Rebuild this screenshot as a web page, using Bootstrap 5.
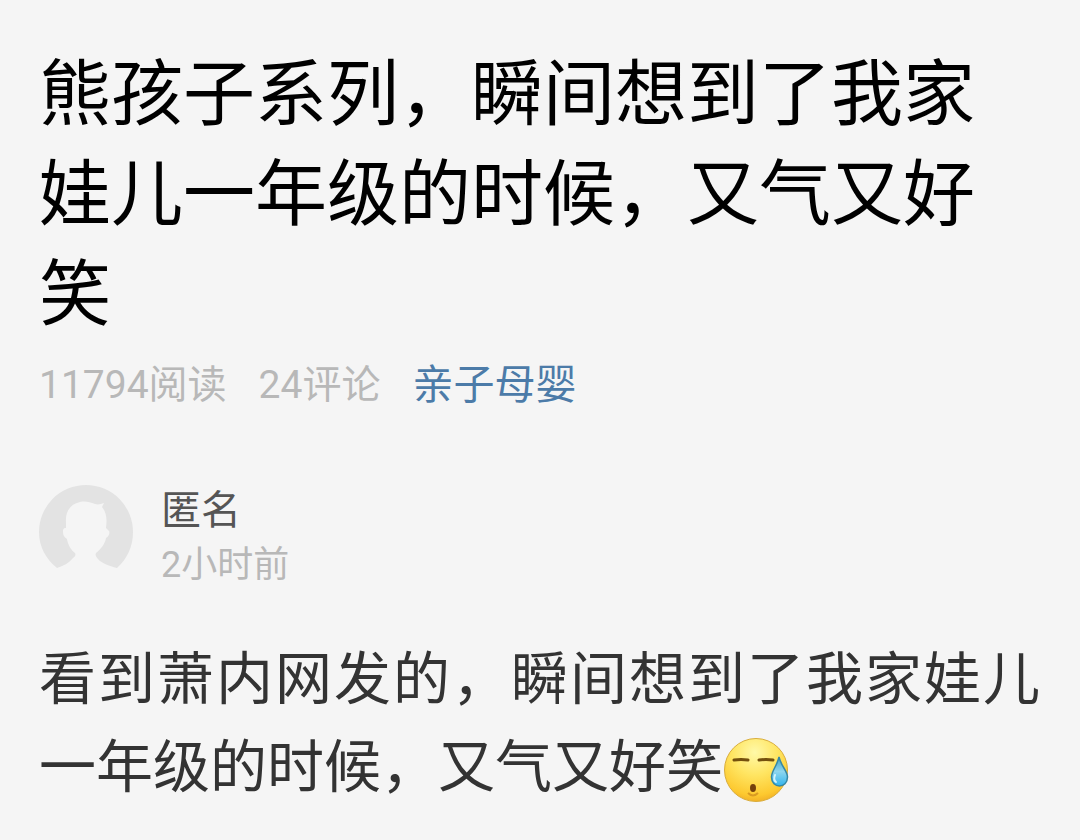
<!DOCTYPE html>
<html lang="zh-CN">
<head>
<meta charset="utf-8">
<meta name="viewport" content="width=device-width, initial-scale=1">
<title>熊孩子系列</title>
<link href="https://cdn.jsdelivr.net/npm/bootstrap@5.3.0/dist/css/bootstrap.min.css" rel="stylesheet">
<style>
body { background: #f5f5f5; font-family: "Noto Sans CJK SC", sans-serif; }
.post { padding: 38px 40px 24px 39px; }
.post-title { font-size: 72px; line-height: 100px; font-weight: 400; color: #000; margin-bottom: 23px; padding-right: 28px; }
.post-meta { font-size: 39px; line-height: 48px; gap: 32px; color: #b8b8b8; font-family: Roboto, "Noto Sans CJK SC", sans-serif; margin-bottom: 69px; }
.post-topic { font-size: 41px; color: #4c7ba8; }
.author { gap: 28px; margin-bottom: 36px; }
.avatar { width: 94px; height: 94px; margin-top: 7px; }
.author-name { font-size: 40px; line-height: 58px; color: #555; }
.author-time { font-size: 36px; line-height: 58px; color: #b8b8b8; font-family: Roboto, "Noto Sans CJK SC", sans-serif; }
.post-body { font-size: 57px; line-height: 88px; color: #333; text-align: justify; }
.emoji { width: 66px; height: 66px; vertical-align: -16px; }
</style>
</head>
<body>
<main class="post">
  <h1 class="post-title">熊孩子系列，瞬间想到了我家娃儿一年级的时候，又气又好笑</h1>
  <div class="post-meta d-flex flex-wrap align-items-center">
    <span>11794阅读</span>
    <span>24评论</span>
    <a class="post-topic text-decoration-none" href="#">亲子母婴</a>
  </div>
  <div class="author d-flex align-items-start">
    <svg class="avatar flex-shrink-0" viewBox="0 0 94 94" aria-hidden="true">
      <path fill="#e3e3e3" d="M18 83C7 74 0 62 0 47a47 47 0 0 1 94 0c0 15-6 27-16 36C70 81 62 78 59 74c-2-2-3-4-2-6 5-4 9-9 10-15 3-2 4-5 3-7l-3-3c1-8 1-15-4-21l2-4c-3 1-6 2-9 1-5-2-10-3-15-2-10 2-15 10-14 21v5c-3 0-3 2-3 4 0 3 1 5 4 7 1 6 4 11 8 14 1 2 0 4-2 5-4 5-10 8-16 10Z"/>
    </svg>
    <div>
      <div class="author-name">匿名</div>
      <div class="author-time">2小时前</div>
    </div>
  </div>
  <p class="post-body mb-0">看到萧内网发的，瞬间想到了我家娃儿一年级的时候，又气又好笑<svg class="emoji" viewBox="0 0 66 66" role="img" aria-label="冷汗">
      <defs>
        <radialGradient id="face" cx=".48" cy=".22" r=".8">
          <stop offset="0" stop-color="#fff9a8"/>
          <stop offset=".45" stop-color="#ffe562"/>
          <stop offset=".85" stop-color="#fdc92f"/>
          <stop offset="1" stop-color="#f0ad25"/>
        </radialGradient>
        <linearGradient id="drop" x1="0" y1="0" x2="0" y2="1">
          <stop offset="0" stop-color="#3f9fc4"/>
          <stop offset=".5" stop-color="#8ed6ee"/>
          <stop offset="1" stop-color="#31b4ee"/>
        </linearGradient>
      </defs>
      <circle cx="33" cy="33" r="31.500" fill="url(#face)" stroke="#d9ad3c"/>
      <path d="M11 23q7-1 14 0M36 23q7-1 14 0" fill="none" stroke="#74500d" stroke-width="3" stroke-linecap="round"/>
      <ellipse cx="30" cy="51" rx="3" ry="4" fill="#74400c"/>
      <path d="M25 56q5 5 10 0" fill="none" stroke="#d99b22" stroke-width="2"/>
      <path d="M56 20c2 9 8.500 14 8.500 20 0 12-16 12-16 0 0-6 5.500-11 7.500-20Z" fill="url(#drop)" stroke="#3688a5" stroke-width="1.500"/>
      <path d="M52 38q-2 5 1 7" fill="none" stroke="#d4f4fd" stroke-width="2" stroke-linecap="round"/>
    </svg></p>
</main>
<script src="https://cdn.jsdelivr.net/npm/bootstrap@5.3.0/dist/js/bootstrap.bundle.min.js"></script>
</body>
</html>
